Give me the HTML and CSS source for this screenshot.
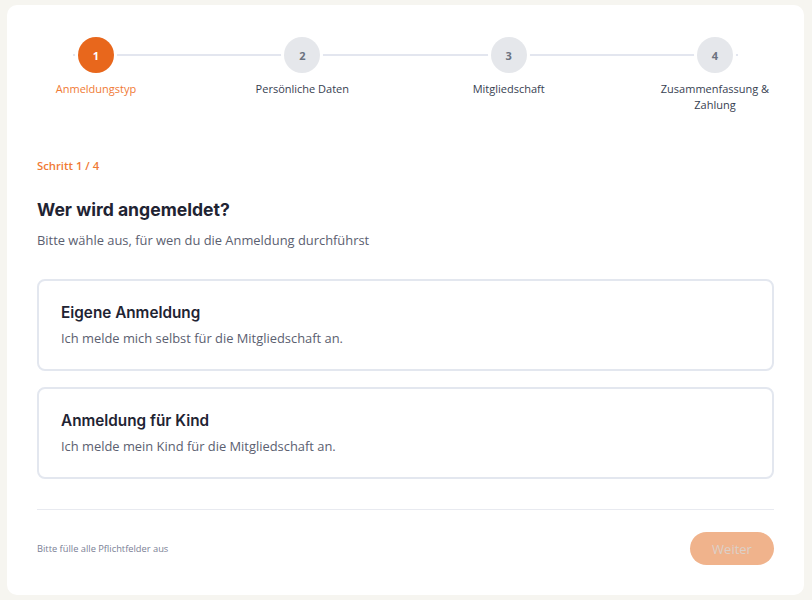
FILE: index.html
```html
<!DOCTYPE html>
<html lang="de">
<head>
    <meta charset="UTF-8">
    <meta name="viewport" content="width=device-width, initial-scale=1.0">
    <title>Anmeldung - Schritt 1</title>
    <link rel="stylesheet" href="styles.css">
</head>
<body>
    <div class="card">
        <div class="stepper">
            <div class="stepper-line"></div>
            <div class="step active">
                <div class="step-dot">1</div>
                <div class="step-label">Anmeldungstyp</div>
            </div>
            <div class="step">
                <div class="step-dot">2</div>
                <div class="step-label">Persönliche Daten</div>
            </div>
            <div class="step">
                <div class="step-dot">3</div>
                <div class="step-label">Mitgliedschaft</div>
            </div>
            <div class="step">
                <div class="step-dot">4</div>
                <div class="step-label">Zusammenfassung &amp; Zahlung</div>
            </div>
        </div>

        <div class="step-count">Schritt 1 / 4</div>
        <h1>Wer wird angemeldet?</h1>
        <p class="lead">Bitte wähle aus, für wen du die Anmeldung durchführst</p>

        <div class="options">
            <div class="option">
                <h3>Eigene Anmeldung</h3>
                <p>Ich melde mich selbst für die Mitgliedschaft an.</p>
            </div>
            <div class="option">
                <h3>Anmeldung für Kind</h3>
                <p>Ich melde mein Kind für die Mitgliedschaft an.</p>
            </div>
        </div>

        <div class="footer">
            <span class="hint">Bitte fülle alle Pflichtfelder aus</span>
            <button class="btn-next" disabled>Weiter</button>
        </div>
    </div>
</body>
</html>
```

FILE: styles.css
```css
body { margin: 0; padding: 5px 8px 5px 7px; background: #f6f5f0; font-family: "Open Sans", Arial, sans-serif; color: #1f2433; }
.card { background: white; border-radius: 10px; padding: 32px 30px 30px 30px; }

/* stepper */
.stepper { position: relative; display: flex; justify-content: space-between; }
.stepper-line { position: absolute; left: 36px; right: 36px; top: 17px; height: 2px; background: #e3e6ef; }
.step { position: relative; width: 118px; display: flex; flex-direction: column; align-items: center; }
.step-dot { width: 36px; height: 36px; border-radius: 50%; background: #e5e7eb; color: #6b7280; box-shadow: 0 0 0 3px white; display: flex; align-items: center; justify-content: center; font-size: 11px; font-weight: 700; }
.step-label { margin-top: 8px; font-size: 11px; line-height: 16px; font-weight: 500; color: #374151; text-align: center; }
.step.active .step-dot { background: #e8671c; color: white; }
.step.active .step-label { color: #f07a35; }

.step-count { margin-top: 45px; font-size: 11.3px; line-height: 16px; font-weight: 600; color: #f07a35; }
h1 { margin: 24px 0 0 0; font-family: "Inter", sans-serif; font-size: 17.6px; line-height: 24px; font-weight: 700; color: #1f2433; }
.lead { margin: 8px 0 0 0; font-size: 12.9px; line-height: 20px; color: #5b6070; }

/* choice cards */
.options { margin-top: 29px; display: flex; flex-direction: column; gap: 16px; }
.option { border: 2px solid #e3e7ef; border-radius: 8px; padding: 21px 22px; cursor: pointer; }
.option h3 { margin: 0; font-family: "Inter", sans-serif; font-size: 15.3px; line-height: 22px; font-weight: 600; color: #1f2433; }
.option p { margin: 4px 0 0 0; font-size: 12.9px; line-height: 20px; color: #5b6070; }

.footer { margin-top: 30px; border-top: 1px solid #e8eaf0; padding-top: 22px; display: flex; justify-content: space-between; align-items: center; }
.hint { font-size: 9.3px; color: #7a8095; }
.btn-next { background: #f0b38c; color: #dcd0c8; border: none; border-radius: 17px; height: 33px; width: 84px; font-family: "Open Sans", sans-serif; font-size: 13px; }
```
